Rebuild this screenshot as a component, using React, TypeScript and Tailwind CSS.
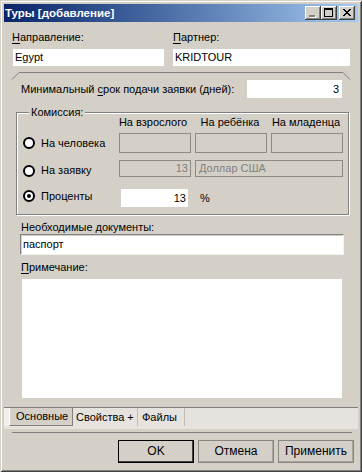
import React from "react";

function Radio({ checked }: { checked?: boolean }) {
  return (
    <svg width="12" height="12" viewBox="0 0 12 12" className="shrink-0">
      <circle cx="6" cy="6" r="5" fill="#ffffff" stroke="#000000" strokeWidth="2" />
      {checked && <circle cx="6" cy="6" r="2" fill="#000000" />}
    </svg>
  );
}

function TitleBtn({ children }: { children: React.ReactNode }) {
  return (
    <div className="w-[16px] h-[14px] bg-[#d4d0c8] shadow-[inset_-1px_-1px_0_#404040,inset_1px_1px_0_#ffffff,inset_-2px_-2px_0_#808080] flex items-center justify-center">
      {children}
    </div>
  );
}

function DisabledBox({ children, right }: { children?: React.ReactNode; right?: boolean }) {
  return (
    <div
      className={
        right
          ? "h-full border border-[#8e8b86] bg-[#d4d0c8] text-[#808080] flex items-center justify-end pr-[2px]"
          : "h-full border border-[#8e8b86] bg-[#d4d0c8] text-[#808080] flex items-center pl-[3px]"
      }
    >
      {children}
    </div>
  );
}

function Btn({ label, def }: { label: string; def?: boolean }) {
  return (
    <div
      className={
        def
          ? "w-[76px] h-[23px] border border-black bg-[#d4d0c8] shadow-[inset_-1px_-1px_0_#404040] flex items-center justify-center text-[12px] text-black"
          : "w-[76px] h-[23px] border border-[#8a8782] bg-[#d4d0c8] shadow-[inset_-1px_-1px_0_#a8a59f] flex items-center justify-center text-[12px] text-black"
      }
    >
      {label}
    </div>
  );
}

export default function App() {
  return (
    <div className="w-[362px] h-[472px] bg-[#d4d0c8] p-[4px] flex flex-col font-['Liberation_Sans',Arial,sans-serif] text-[11px] leading-[13px] text-black shadow-[inset_1px_1px_0_#d4d0c8,inset_-1px_-1px_0_#404040,inset_2px_2px_0_#ffffff,inset_-2px_-2px_0_#808080]">
      {/* Title bar */}
      <div className="h-[18px] shrink-0 flex items-center bg-linear-to-r from-[#0a246a] to-[#a6caf0]">
        <div className="ml-[1px] text-white font-bold text-[11.5px]">Туры [добавление]</div>
        <div className="ml-auto mr-[3px] flex items-center">
          <TitleBtn>
            <svg width="16" height="14" viewBox="0 0 16 14">
              <rect x="5" y="10" width="6" height="2" fill="#ffffff" />
              <rect x="4" y="9" width="6" height="2" fill="#808080" />
            </svg>
          </TitleBtn>
          <TitleBtn>
            <svg width="16" height="14" viewBox="0 0 16 14">
              <rect x="3.5" y="2.5" width="8" height="8" fill="none" stroke="#000" strokeWidth="1" />
              <rect x="3" y="2" width="9" height="2" fill="#000" />
            </svg>
          </TitleBtn>
          <div className="w-[2px]" />
          <TitleBtn>
            <svg width="16" height="14" viewBox="0 0 16 14">
              <path d="M4 3 L11 10 M5 3 L12 10 M11 3 L4 10 M12 3 L5 10" stroke="#000" strokeWidth="1" fill="none" />
            </svg>
          </TitleBtn>
        </div>
      </div>

      {/* Labels */}
      <div className="flex mt-[9px] h-[13px]">
        <div className="ml-[8px] w-[161px]">
          <span className="underline underline-offset-2">Н</span>аправление:
        </div>
        <div>
          <span className="underline underline-offset-2">П</span>артнер:
        </div>
      </div>
      <div className="flex mt-[5px] h-[17px]">
        <div className="ml-[9px] w-[151px] bg-white flex items-center pl-[2px]">Egypt</div>
        <div className="ml-[9px] w-[177px] bg-white flex items-center pl-[2px]">KRIDTOUR</div>
      </div>

      {/* Panel top decoration */}
      <svg width="354" height="8" viewBox="0 0 354 8" className="mt-[6px] shrink-0">
        <path d="M8 7.5 L15 0.5 L339 0.5 L346 7.5" fill="none" stroke="#808080" strokeWidth="1" />
      </svg>

      {/* Min srok row */}
      <div className="flex items-center h-[18px]">
        <div className="ml-[17px]">
          Минимальный <span className="underline underline-offset-2">с</span>рок подачи заявки (дней):
        </div>
        <div className="ml-auto mr-[16px] w-[95px] h-full bg-white flex items-center justify-end pr-[3px]">3</div>
      </div>

      {/* Commission group */}
      <div className="relative mt-[14px] ml-[12px] w-[333px] h-[103px] shrink-0 border border-[#808080] shadow-[inset_1px_1px_0_#ffffff,1px_1px_0_#ffffff] flex flex-col">
        <div className="absolute left-[12px] top-[-7px] bg-[#d4d0c8] px-[2px]">Комиссия:</div>
        <div className="grid grid-cols-[98px_72px_72px_72px] gap-x-[4px] mt-[3px] h-[13px]">
          <div />
          <div className="text-center -ml-[4px]">На взрослого</div>
          <div className="text-center -ml-[2px]">На ребёнка</div>
          <div className="text-center -ml-[2px]">На младенца</div>
        </div>
        <div className="grid grid-cols-[98px_72px_72px_72px] gap-x-[4px] mt-[4px] h-[20px]">
          <div className="flex items-center pl-[6px]">
            <Radio />
            <span className="ml-[6px]">На человека</span>
          </div>
          <DisabledBox />
          <DisabledBox />
          <DisabledBox />
        </div>
        <div className="grid grid-cols-[98px_72px_72px_72px] gap-x-[4px] mt-[7px] h-[17px]">
          <div className="flex items-center pl-[6px] pt-[4px]">
            <Radio />
            <span className="ml-[6px]">На заявку</span>
          </div>
          <DisabledBox right>13</DisabledBox>
          <div className="col-span-2">
            <DisabledBox>Доллар США</DisabledBox>
          </div>
        </div>
        <div className="grid grid-cols-[98px_72px_72px_72px] gap-x-[4px] mt-[12px] h-[18px]">
          <div className="flex items-center pl-[6px] pb-[4px]">
            <Radio checked />
            <span className="ml-[6px]">Проценты</span>
          </div>
          <div className="ml-[2px] w-[67px] h-full bg-white flex items-center justify-end pr-[2px]">13</div>
          <div className="flex items-center pl-[5px]">%</div>
        </div>
      </div>

      {/* Documents */}
      <div className="mt-[6px] ml-[17px] h-[13px]">Необходимые документы:</div>
      <div className="ml-[16px] w-[324px] h-[21px] shrink-0 bg-white border-t border-l border-[#808080] border-b border-r border-b-[#f4f3f0] border-r-[#f4f3f0] shadow-[inset_1px_1px_0_#d4d0c8] flex items-center pl-[2px]">
        паспорт
      </div>

      <div className="mt-[6px] ml-[17px] h-[13px]">
        <span className="underline underline-offset-2">П</span>римечание:
      </div>
      <div className="mt-[5px] ml-[18px] w-[320px] h-[119px] shrink-0 bg-white" />

      {/* Tabs */}
      <div className="mt-[9px] h-[22px] shrink-0 border-t border-[#808080] bg-[#e6e3de] flex items-start">
        <div className="w-[5px] h-[18px] bg-[#f1efeb]" />
        <div className="w-[64px] h-[18px] bg-[#d4d0c8] border-l border-l-white border-r border-r-[#808080] border-b border-b-[#808080] flex items-center pl-[6px]">
          Основные
        </div>
        <div className="w-[65px] h-[18px] border-r border-[#c0bdb7] flex items-center pl-[3px]">Свойства +</div>
        <div className="w-[47px] h-[18px] border-r border-[#c0bdb7] flex items-center pl-[4px]">Файлы</div>
      </div>

      {/* Separator */}
      <div className="mt-[3px] ml-[8px] w-[340px] h-[1px] shrink-0 bg-[#808080]" />

      {/* Buttons */}
      <div className="mt-[7px] flex justify-end gap-[4px] pr-[4px]">
        <Btn label="OK" def />
        <Btn label="Отмена" />
        <Btn label="Применить" />
      </div>
    </div>
  );
}
